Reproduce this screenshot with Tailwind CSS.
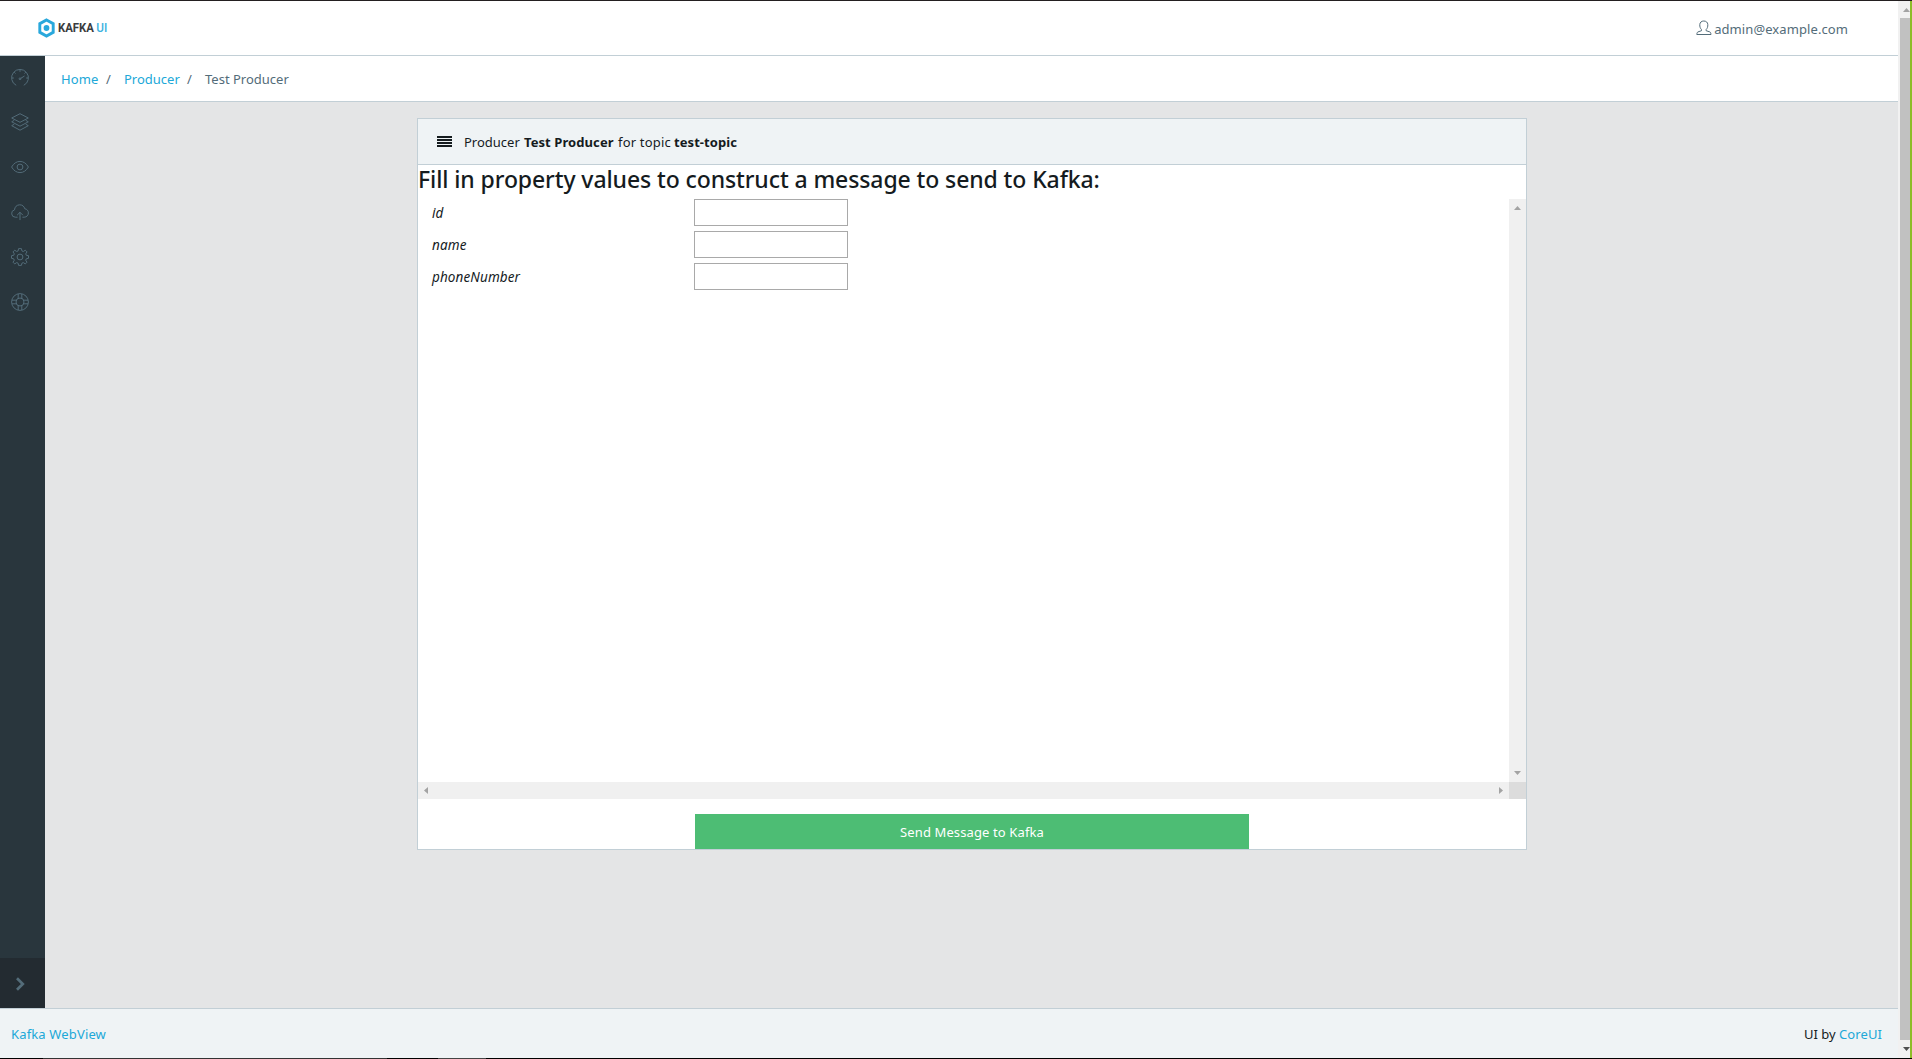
<!DOCTYPE html>
<html lang="en">
<head>
<meta charset="utf-8">
<title>Kafka WebView</title>
<script src="https://cdn.jsdelivr.net/npm/@tailwindcss/browser@4"></script>
</head>
<body class="h-[1059px] w-[1912px] overflow-hidden bg-white font-['Noto_Sans',sans-serif] text-[13px] leading-[21px] text-[#151b1e]">
<div class="flex h-full flex-col border-t border-[#231f20]">
  <div class="flex min-h-0 flex-1">
    <div class="flex w-[1898px] flex-col">
      <header class="flex h-[55px] shrink-0 items-center justify-between border-b border-[#c2cfd6] bg-white pl-[38px] pr-[50px]">
        <div class="flex items-center gap-[3px]">
          <svg class="h-5 w-[17px]" viewBox="0 0 17 20"><path d="M8.5 1.9 15.2 5.7v8.6L8.5 18.1 1.8 14.3V5.7Z" fill="none" stroke="#29a8dc" stroke-width="2.9"/><circle cx="8.5" cy="10" r="2.9" fill="#29a8dc"/></svg>
          <svg class="h-5 w-[50px]" viewBox="0 0 50 20"><text x="0" y="14.3" textLength="36" lengthAdjust="spacingAndGlyphs" class="font-['Roboto',sans-serif] text-[12.5px] font-bold" fill="#3a3c3e">KAFKA</text><text x="38.3" y="14.3" textLength="11" lengthAdjust="spacingAndGlyphs" class="font-['Roboto',sans-serif] text-[12.5px] font-medium" fill="#3db2df">UI</text></svg>
        </div>
        <div class="flex items-center gap-[2px] text-[#536c79]">
          <svg class="h-4 w-4" viewBox="0 0 16 16" fill="none" stroke="currentColor"><path d="M5.5 9.6C4.2 8.3 3.7 6.7 3.8 4.6 3.9 2.3 5.5 1 7.8 1s3.9 1.300 4 3.600c.1 2.100-.4 3.700-1.700 5v1.100l3.700 1.200c.8.3 1.100 1.400 1.200 2.600H.8c.1-1.200.4-2.300 1.200-2.600l3.500-1.200Z"/></svg>
          <span class="mt-[3px] tracking-[0.09px]">admin@example.com</span>
        </div>
      </header>
      <div class="flex min-h-0 flex-1">
        <aside class="flex w-[45px] flex-col justify-between bg-[#29363d] text-[#536c79]">
          <nav class="flex flex-col">
            <a class="flex h-[43px] items-center pl-[11px]"><svg class="h-[18px] w-[18px]" viewBox="0 0 18 18" fill="none" stroke="currentColor"><path d="M5.200 16.300A8.400 8.400 0 1 1 12.800 16.300M9 .8v2M3.200 3.200l1.300 1.300M.8 9h2M15.200 9h2M13.500 4.500l1.300-1.300M9.500 9.500l4-2.500"/><circle cx="9" cy="9.800" r=".9"/></svg></a>
            <a class="flex h-[45px] items-center pl-[11px]"><svg class="h-[18px] w-[18px]" viewBox="0 0 18 18" fill="none" stroke="currentColor" stroke-linejoin="round"><path d="M9 .7 17.300 5 9 9.300.7 5ZM3.300 7.300.7 8.800 9 13.200l8.300-4.400-2.600-1.500M3.300 11.200.7 12.700 9 17.200l8.300-4.500-2.600-1.500"/></svg></a>
            <a class="flex h-[45px] items-center pl-[11px]"><svg class="h-[18px] w-[18px]" viewBox="0 0 18 18" fill="none" stroke="currentColor"><path d="M.6 9C2.800 5.200 5.700 3.400 9 3.400S15.200 5.200 17.400 9C15.200 12.800 12.300 14.600 9 14.600S2.800 12.800.6 9Z"/><circle cx="9" cy="9" r="2.900"/></svg></a>
            <a class="flex h-[45px] items-center pl-[11px]"><svg class="h-[18px] w-[18px]" viewBox="0 0 18 18" fill="none" stroke="currentColor" stroke-linecap="round"><path d="M6.200 14.200H4.300a3.700 3.700 0 0 1-.8-7.300C3.700 3.900 5.800 1.800 8.700 1.800c2.600 0 4.500 1.500 5.100 4 2.100.2 3.600 1.900 3.600 4.100 0 2.400-1.800 4.300-4.200 4.300h-1.400M9 16.700V9.500M6.400 11.900 9 9.300l2.600 2.600"/></svg></a>
            <a class="flex h-[45px] items-center pl-[11px]"><svg class="h-[18px] w-[18px]" viewBox="0 0 18 18" fill="none" stroke="currentColor" stroke-linejoin="round"><path d="M7.600.6h2.800l.5 2.300 1.400.6 2-1.300 1.700 1.700-1.300 2 .6 1.400 2.200.4v2.600l-2.200.5-.6 1.400 1.300 2-1.700 1.700-2-1.300-1.400.6-.5 2.200H7.600l-.5-2.200-1.400-.6-2 1.300L2 14.200l1.300-2-.6-1.400-2.200-.5V7.700l2.200-.4.600-1.400L2 3.900l1.700-1.700 2 1.300 1.400-.6Z"/><circle cx="9" cy="9" r="2.900"/></svg></a>
            <a class="flex h-[45px] items-center pl-[11px]"><svg class="h-[18px] w-[18px]" viewBox="0 0 18 18" fill="none" stroke="currentColor"><circle cx="9" cy="9" r="8.400"/><circle cx="9" cy="9" r="4"/><path d="M7.200.9v4.500M10.800.9v4.500M7.200 12.600v4.500M10.800 12.600v4.500M.9 7.200h4.500M.9 10.800h4.500M12.600 7.200h4.500M12.600 10.800h4.500"/></svg></a>
          </nav>
          <button class="flex h-[50px] items-center bg-[#232b31] pl-4 pt-px"><svg class="h-[14px] w-[9px]" viewBox="0 0 9 14"><path d="M1 1.200 6.800 7 1 12.800" fill="none" stroke="currentColor" stroke-width="2.700"/></svg></button>
        </aside>
        <main class="flex flex-1 flex-col bg-[#e4e5e6]">
          <nav class="flex h-[46px] shrink-0 items-center border-b border-[#c2cfd6] bg-white pl-4 pt-[2px] text-[#536c79]">
            <a class="w-[45px] tracking-[0.1px] text-[#20a8d8]">Home</a><span class="w-[18px]">/</span><a class="w-[63px] text-[#20a8d8]">Producer</a><span class="w-[18px]">/</span><span>Test Producer</span>
          </nav>
          <section class="ml-[372px] mt-4 flex h-[732px] w-[1110px] flex-col border border-[#c2cfd6] bg-white">
            <div class="flex h-[46px] shrink-0 items-center border-b border-[#c2cfd6] bg-[#eff3f5] pl-[19px]">
              <div class="mr-[12px] flex h-[11px] w-[15px] flex-col justify-between"><i class="h-[2px] bg-[#151b1e]"></i><i class="h-[2px] bg-[#151b1e]"></i><i class="h-[2px] bg-[#151b1e]"></i><i class="h-[2px] bg-[#151b1e]"></i></div>
              <div class="flex pt-[2px]"><span class="w-[60px]">Producer</span><b class="w-[94px] tracking-[0.08px]">Test Producer</b><span class="w-14 tracking-[0.19px]">for topic</span><b class="tracking-[0.07px]">test-topic</b></div>
            </div>
            <h3 class="h-[34px] shrink-0 whitespace-nowrap text-[23px] font-medium leading-[29px] tracking-[-0.1px]">Fill in property values to construct a message to send to Kafka:</h3>
            <div class="grid h-[600px] shrink-0 grid-cols-[1fr_17px] grid-rows-[1fr_17px]">
              <form class="flex flex-col gap-[5px] pl-[14px] text-[13.500px] italic tracking-[0.11px]">
                <label class="flex h-[27px] items-center"><span class="w-[262px] pt-[2px]">id</span><input class="h-[27px] w-[154px] border border-[#a9a9a9] bg-white"></label>
                <label class="flex h-[27px] items-center"><span class="w-[262px] pt-[2px]">name</span><input class="h-[27px] w-[154px] border border-[#a9a9a9] bg-white"></label>
                <label class="flex h-[27px] items-center"><span class="w-[262px] pt-[2px]">phoneNumber</span><input class="h-[27px] w-[154px] border border-[#a9a9a9] bg-white"></label>
              </form>
              <div class="flex flex-col items-center justify-between bg-[#f0f0f0] py-[7px] text-[#a3a3a3]">
                <svg class="h-1 w-[7px]" viewBox="0 0 7 4"><path d="M0 4 3.500 0 7 4Z" fill="currentColor"/></svg>
                <svg class="h-1 w-[7px]" viewBox="0 0 7 4"><path d="M0 0H7L3.500 4Z" fill="currentColor"/></svg>
              </div>
              <div class="flex items-center justify-between bg-[#f0f0f0] px-[6px] text-[#a3a3a3]">
                <svg class="h-[7px] w-1" viewBox="0 0 4 7"><path d="M4 0V7L0 3.500Z" fill="currentColor"/></svg>
                <svg class="h-[7px] w-1" viewBox="0 0 4 7"><path d="M0 0V7L4 3.500Z" fill="currentColor"/></svg>
              </div>
              <div class="bg-[#dcdcdc]"></div>
            </div>
            <button class="ml-[277px] mt-[15px] h-[35px] w-[554px] shrink-0 bg-[#4dbd74] pt-[2px] tracking-[0.12px] text-white">Send Message to Kafka</button>
          </section>
        </main>
      </div>
      <footer class="flex h-[50px] shrink-0 items-center justify-between border-t border-[#c2cfd6] bg-[#eff3f5] pl-[11px] pr-4 pt-[2px]">
        <a class="tracking-[0.150px] text-[#20a8d8]">Kafka WebView</a>
        <span>UI by <a class="tracking-[0.1px] text-[#20a8d8]">CoreUI</a></span>
      </footer>
    </div>
    <div class="flex w-3 flex-col items-end bg-[#f1f1f1]">
      <div class="flex h-[17px] w-[10px] items-center justify-end"><svg class="h-1 w-[7px]" viewBox="0 0 7 4"><path d="M0 4 3.500 0 7 4Z" fill="#a3a3a3"/></svg></div>
      <div class="w-[10px] flex-1 bg-[#c1c1c1]"></div>
      <div class="flex h-[18px] w-[10px] items-center justify-end"><svg class="h-1 w-[7px]" viewBox="0 0 7 4"><path d="M0 0H7L3.500 4Z" fill="#505050"/></svg></div>
    </div>
    <div class="w-[2px] bg-[#8dbd28]"></div>
  </div>
  <div class="flex h-px shrink-0 bg-black"><div class="ml-[43px] w-[344px] bg-[#333]"></div><div class="ml-[51px] w-12 bg-[#444]"></div></div>
</div>
</body>
</html>
